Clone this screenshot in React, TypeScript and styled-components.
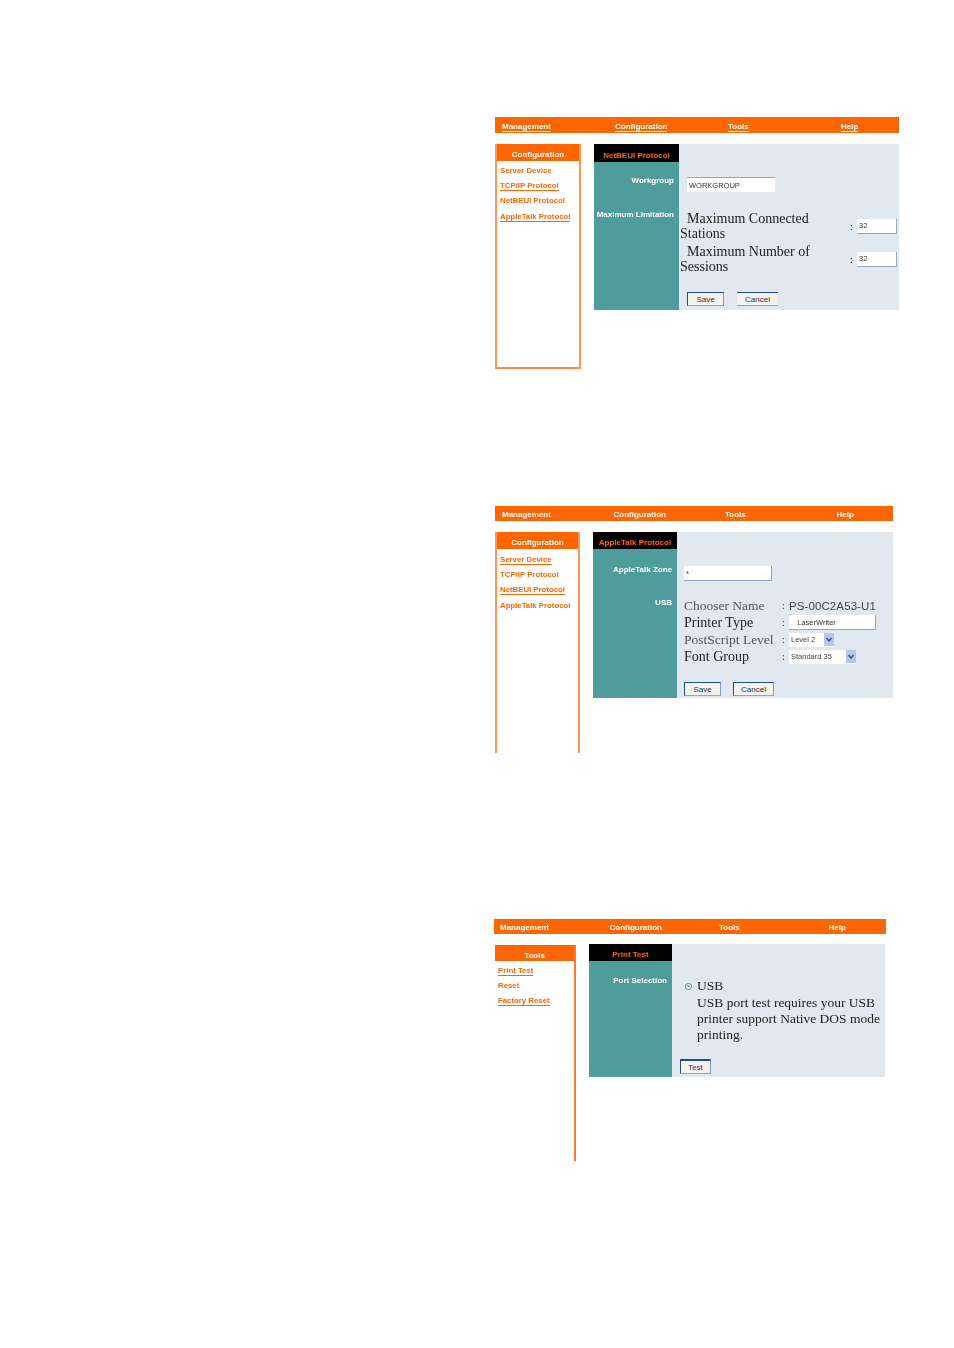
import React from "react";
import styled, { createGlobalStyle } from "styled-components";

const Global = createGlobalStyle`
  html, body { margin: 0; padding: 0; background: #fff; }
  body { font-family: "Liberation Sans", Arial, sans-serif; }
`;

const Page = styled.div`
  width: 954px;
  height: 1348px;
  overflow: hidden;
  padding-top: 117px;
  box-sizing: border-box;
`;

const Panel = styled.section<{ $left: number; $width: number; $top: number }>`
  margin-left: ${(p) => p.$left}px;
  margin-top: ${(p) => p.$top}px;
  width: ${(p) => p.$width}px;
  filter: blur(0.55px);
`;

const Nav = styled.nav<{ $col: number; $h: number; $pad: number }>`
  display: grid;
  grid-template-columns: repeat(4, ${(p) => p.$col}px);
  height: ${(p) => p.$h}px;
  align-items: center;
  padding-left: ${(p) => p.$pad}px;
  padding-top: 3px;
  box-sizing: border-box;
  background: #ff6600;
`;

const NavLink = styled.span<{ $u?: boolean }>`
  justify-self: start;
  color: #fff;
  font-size: 8px;
  font-weight: 700;
  line-height: 9px;
  border-bottom: ${(p) => (p.$u ? "1px solid #fff" : "1px solid transparent")};
`;

const Body = styled.div<{ $top: number; $gap: number; $inset?: number }>`
  display: flex;
  align-items: flex-start;
  margin-top: ${(p) => p.$top}px;
  margin-left: ${(p) => p.$inset ?? 0}px;
  gap: ${(p) => p.$gap}px;
`;

const Side = styled.aside<{ $w: number; $h: number; $mode: "box" | "open" | "right"; $drop?: number }>`
  width: ${(p) => p.$w}px;
  height: ${(p) => p.$h}px;
  margin-top: ${(p) => p.$drop ?? 0}px;
  flex: none;
  box-sizing: border-box;
  border-right: 2px solid ${(p) => (p.$mode === "right" ? "#ff7a2a" : "#ff9455")};
  border-left: ${(p) => (p.$mode === "right" ? "none" : "2px solid #ff9455")};
  border-bottom: ${(p) => (p.$mode === "box" ? "2px solid #ff8c42" : "none")};
`;

const SideHead = styled.div<{ $h: number }>`
  height: ${(p) => p.$h}px;
  background: #ff6600;
  color: #fff;
  font-size: 8px;
  font-weight: 700;
  text-align: center;
  line-height: ${(p) => p.$h + 5}px;
`;

const SideList = styled.div<{ $pad: number; $top: number }>`
  display: flex;
  flex-direction: column;
  align-items: flex-start;
  padding-left: ${(p) => p.$pad}px;
  padding-top: ${(p) => p.$top}px;
`;

const SideLink = styled.span<{ $u?: boolean }>`
  height: 15.2px;
  box-sizing: border-box;
  color: #ff6600;
  font-size: 7.8px;
  font-weight: 700;
  line-height: 12px;
  white-space: nowrap;
  span {
    display: inline-block;
    line-height: 9px;
    border-bottom: ${(p) => (p.$u ? "1.5px solid #ff6600" : "none")};
  }
`;

const Main = styled.div<{ $w: number; $h: number; $col: number }>`
  display: grid;
  grid-template-columns: ${(p) => p.$col}px 1fr;
  width: ${(p) => p.$w}px;
  height: ${(p) => p.$h}px;
  flex: none;
  background: #e2e8f0;
`;

const LeftCol = styled.div`
  display: flex;
  flex-direction: column;
  background: #4f9c9c;
`;

const Title = styled.div<{ $h: number }>`
  height: ${(p) => p.$h}px;
  flex: none;
  background: #000;
  color: #ff6600;
  font-size: 8px;
  font-weight: 700;
  text-align: center;
  line-height: ${(p) => p.$h + 5}px;
  white-space: nowrap;
`;

const Label = styled.div<{ $top: number; $right?: number }>`
  margin-top: ${(p) => p.$top}px;
  padding-right: ${(p) => p.$right ?? 5}px;
  color: #fff;
  font-size: 8px;
  font-weight: 700;
  line-height: 9px;
  text-align: right;
  white-space: nowrap;
`;

const Right = styled.div<{ $pad: number; $top: number }>`
  display: flex;
  flex-direction: column;
  align-items: flex-start;
  padding-left: ${(p) => p.$pad}px;
  padding-top: ${(p) => p.$top}px;
  font-family: "Liberation Serif", "Times New Roman", serif;
  font-size: 14px;
  color: #222;
`;

const Field = styled.input<{ $w: number; $h?: number; $edge?: "top" | "corner" }>`
  display: block;
  width: ${(p) => p.$w}px;
  height: ${(p) => p.$h ?? 15}px;
  box-sizing: border-box;
  padding: 0 0 0 2px;
  margin: 0;
  outline: none;
  background: #fff;
  border: none;
  border-top: ${(p) => (p.$edge === "top" ? "1px solid #8fa6c4" : "none")};
  border-right: ${(p) => (p.$edge === "corner" ? "1px solid #8fa6c4" : "none")};
  border-bottom: ${(p) => (p.$edge === "corner" ? "1px solid #8fa6c4" : "none")};
  font-family: "Liberation Sans", Arial, sans-serif;
  font-size: 7.5px;
  color: #333;
`;

const LimitRow = styled.div<{ $top: number }>`
  display: grid;
  grid-template-columns: 170px 7px 40px;
  align-items: center;
  margin-top: ${(p) => p.$top}px;
  margin-left: -7px;
`;

const LimitText = styled.div`
  text-indent: 7px;
  line-height: 15px;
`;

const Colon = styled.span`
  font-size: 10px;
  color: #333;
`;

const ButtonRow = styled.div<{ $top: number; $gap: number; $left?: number }>`
  display: flex;
  gap: ${(p) => p.$gap}px;
  margin-top: ${(p) => p.$top}px;
  margin-left: ${(p) => p.$left ?? 0}px;
`;

const Btn = styled.button<{ $w: number; $dark?: boolean; $thick?: boolean }>`
  width: ${(p) => p.$w}px;
  height: ${(p) => (p.$thick ? 15 : 14)}px;
  box-sizing: border-box;
  padding: 0;
  background: #f4f2ec;
  border: none;
  border-top: ${(p) => (p.$thick ? 2 : 1)}px solid #1f4f8a;
  border-left: ${(p) => (p.$dark ? "1px solid #1f4f8a" : "none")};
  border-right: ${(p) => (p.$dark ? "1px solid #7f9cc0" : "none")};
  border-bottom: 1px solid #8fa6c4;
  font-family: "Liberation Sans", Arial, sans-serif;
  font-size: 8px;
  line-height: 11px;
  color: #333;
`;

const InfoGrid = styled.div`
  display: grid;
  grid-template-columns: 98px 7px auto;
  grid-auto-rows: 17px;
  align-items: center;
  margin-top: 16px;
  white-space: nowrap;
`;

const InfoName = styled.span<{ $soft?: boolean }>`
  font-size: ${(p) => (p.$soft ? 13.5 : 14)}px;
  color: ${(p) => (p.$soft ? "#555" : "#222")};
`;

const InfoValue = styled.span`
  font-family: "Liberation Sans", Arial, sans-serif;
  font-size: 11.5px;
  color: #444;
  letter-spacing: 0.1px;
`;

const Select = styled.div<{ $w: number }>`
  display: flex;
  align-items: center;
  justify-content: space-between;
  width: ${(p) => p.$w}px;
  height: 14px;
  padding-left: 2px;
  box-sizing: border-box;
  background: #fff;
  font-family: "Liberation Sans", Arial, sans-serif;
  font-size: 7.5px;
  color: #444;
`;

const Arrow = styled.span`
  display: flex;
  align-items: center;
  justify-content: center;
  width: 10px;
  height: 13px;
  background: #b5c7ea;
  svg { display: block; }
`;

const RadioLine = styled.div`
  display: flex;
  align-items: center;
  gap: 5px;
  font-size: 13.5px;
  line-height: 16px;
`;

const Radio = styled.span`
  width: 7px;
  height: 7px;
  box-sizing: border-box;
  border: 1px solid #5a7a9a;
  border-radius: 50%;
  background: #fff;
  display: flex;
  align-items: center;
  justify-content: center;
  &::after {
    content: "";
    width: 3px;
    height: 2px;
    background: #5fb56a;
    border-radius: 50%;
  }
`;

const Para = styled.p`
  margin: 1px 0 0 12px;
  width: 190px;
  font-size: 13.5px;
  line-height: 16px;
`;

const Chevron = () => (
  <svg width="6" height="5" viewBox="0 0 6 5">
    <path d="M0.5 1 L3 4 L5.5 1" fill="none" stroke="#33508a" strokeWidth="1.4" />
  </svg>
);

export default function App() {
  return (
    <Page>
      <Global />

      <Panel $left={495} $width={404} $top={0}>
        <Nav $col={113} $h={16} $pad={7}>
          <NavLink $u>Management</NavLink>
          <NavLink $u>Configuration</NavLink>
          <NavLink $u>Tools</NavLink>
          <NavLink $u>Help</NavLink>
        </Nav>
        <Body $top={11} $gap={13}>
          <Side $w={86} $h={225} $mode="box">
            <SideHead $h={17}>Configuration</SideHead>
            <SideList $pad={3} $top={4}>
              <SideLink><span>Server Device</span></SideLink>
              <SideLink $u><span>TCP/IP Protocol</span></SideLink>
              <SideLink><span>NetBEUI Protocol</span></SideLink>
              <SideLink $u><span>AppleTalk Protocol</span></SideLink>
            </SideList>
          </Side>
          <Main $w={305} $h={166} $col={85}>
            <LeftCol>
              <Title $h={18}>NetBEUI Protocol</Title>
              <Label $top={14}>Workgroup</Label>
              <Label $top={25}>Maximum Limitation</Label>
            </LeftCol>
            <Right $pad={8} $top={33}>
              <Field $w={88} $edge="top" defaultValue="WORKGROUP" readOnly />
              <LimitRow $top={19}>
                <LimitText>Maximum Connected Stations</LimitText>
                <Colon>:</Colon>
                <Field $w={40} $edge="corner" defaultValue="32" readOnly />
              </LimitRow>
              <LimitRow $top={3}>
                <LimitText>Maximum Number of Sessions</LimitText>
                <Colon>:</Colon>
                <Field $w={40} $edge="corner" defaultValue="32" readOnly />
              </LimitRow>
              <ButtonRow $top={18} $gap={13}>
                <Btn $w={37} $dark>Save</Btn>
                <Btn $w={41}>Cancel</Btn>
              </ButtonRow>
            </Right>
          </Main>
        </Body>
      </Panel>

      <Panel $left={495} $width={398} $top={137}>
        <Nav $col={111.5} $h={15} $pad={7}>
          <NavLink>Management</NavLink>
          <NavLink>Configuration</NavLink>
          <NavLink>Tools</NavLink>
          <NavLink>Help</NavLink>
        </Nav>
        <Body $top={11} $gap={13}>
          <Side $w={85} $h={221} $mode="open">
            <SideHead $h={17}>Configuration</SideHead>
            <SideList $pad={3} $top={5}>
              <SideLink $u><span>Server Device</span></SideLink>
              <SideLink><span>TCP/IP Protocol</span></SideLink>
              <SideLink $u><span>NetBEUI Protocol</span></SideLink>
              <SideLink><span>AppleTalk Protocol</span></SideLink>
            </SideList>
          </Side>
          <Main $w={300} $h={166} $col={84}>
            <LeftCol>
              <Title $h={17}>AppleTalk Protocol</Title>
              <Label $top={16}>AppleTalk Zone</Label>
              <Label $top={24}>USB</Label>
            </LeftCol>
            <Right $pad={7} $top={34}>
              <Field $w={88} $edge="corner" defaultValue="*" readOnly />
              <InfoGrid>
                <InfoName $soft>Chooser Name</InfoName>
                <Colon>:</Colon>
                <InfoValue>PS-00C2A53-U1</InfoValue>
                <InfoName>Printer Type</InfoName>
                <Colon>:</Colon>
                <Field $w={87} $h={15} $edge="corner" defaultValue="   LaserWriter" readOnly />
                <InfoName $soft>PostScript Level</InfoName>
                <Colon>:</Colon>
                <Select $w={45}>
                  Level 2
                  <Arrow><Chevron /></Arrow>
                </Select>
                <InfoName>Font Group</InfoName>
                <Colon>:</Colon>
                <Select $w={67}>
                  Standard 35
                  <Arrow><Chevron /></Arrow>
                </Select>
              </InfoGrid>
              <ButtonRow $top={17} $gap={12}>
                <Btn $w={37} $dark>Save</Btn>
                <Btn $w={41} $dark>Cancel</Btn>
              </ButtonRow>
            </Right>
          </Main>
        </Body>
      </Panel>

      <Panel $left={494} $width={392} $top={166}>
        <Nav $col={109.5} $h={15} $pad={6}>
          <NavLink>Management</NavLink>
          <NavLink>Configuration</NavLink>
          <NavLink>Tools</NavLink>
          <NavLink>Help</NavLink>
        </Nav>
        <Body $top={10} $gap={13} $inset={1}>
          <Side $w={81} $h={216} $mode="right" $drop={1}>
            <SideHead $h={16}>Tools</SideHead>
            <SideList $pad={3} $top={4}>
              <SideLink $u><span>Print Test</span></SideLink>
              <SideLink><span>Reset</span></SideLink>
              <SideLink $u><span>Factory Reset</span></SideLink>
            </SideList>
          </Side>
          <Main $w={296} $h={133} $col={83}>
            <LeftCol>
              <Title $h={17}>Print Test</Title>
              <Label $top={15}>Port Selection</Label>
            </LeftCol>
            <Right $pad={13} $top={34}>
              <RadioLine>
                <Radio />
                USB
              </RadioLine>
              <Para>USB port test requires your USB printer support Native DOS mode printing.</Para>
              <ButtonRow $top={16} $gap={0} $left={-5}>
                <Btn $w={31} $dark $thick>Test</Btn>
              </ButtonRow>
            </Right>
          </Main>
        </Body>
      </Panel>
    </Page>
  );
}
